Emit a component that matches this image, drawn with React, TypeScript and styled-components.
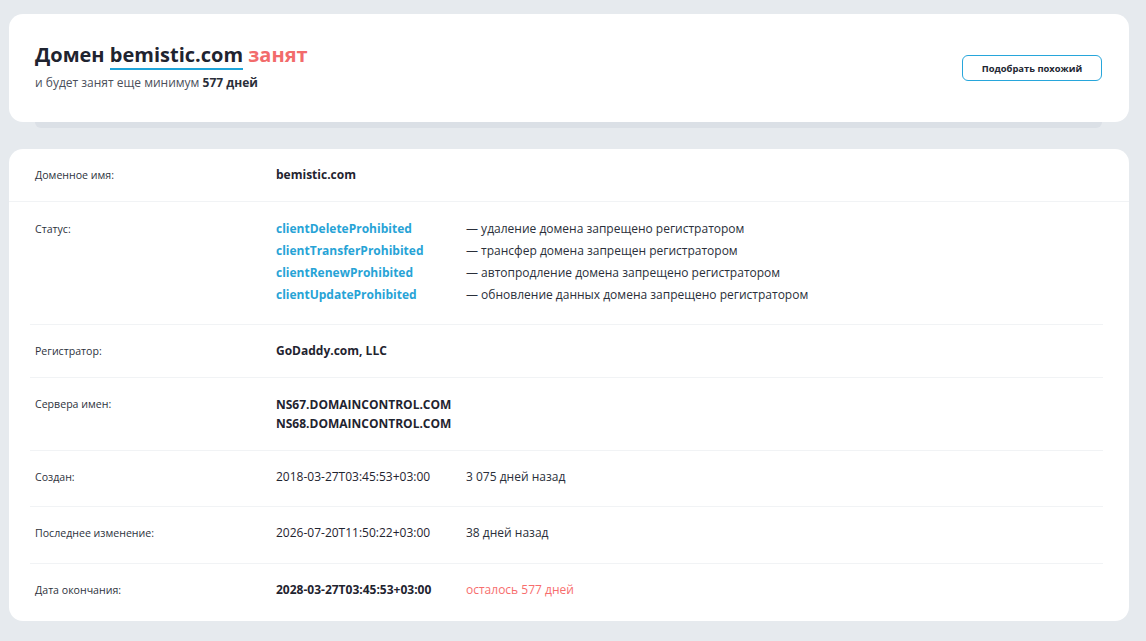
import styled, { createGlobalStyle } from 'styled-components';

const GlobalStyle = createGlobalStyle`
    html, body {
        margin: 0;
        padding: 0;
        background: #e6eaee;
        font-family: "Open Sans", "Noto Sans", sans-serif;
        color: #222631;
    }
`;

interface StatusItem {
    code: string
    text: string
}

const statuses: StatusItem[] = [
    { code: 'clientDeleteProhibited', text: '— удаление домена запрещено регистратором' },
    { code: 'clientTransferProhibited', text: '— трансфер домена запрещен регистратором' },
    { code: 'clientRenewProhibited', text: '— автопродление домена запрещено регистратором' },
    { code: 'clientUpdateProhibited', text: '— обновление данных домена запрещено регистратором' },
];

export default function App(): JSX.Element {
    return (
        <Page>
            <GlobalStyle />
            <HeaderCard>
                <div>
                    <Title>
                        Домен <DomainLink>bemistic.com</DomainLink> <Busy>занят</Busy>
                    </Title>
                    <Subtitle>
                        и будет занят еще минимум <b>577 дней</b>
                    </Subtitle>
                </div>
                <OutlineButton>Подобрать похожий</OutlineButton>
            </HeaderCard>
            <StackShadow />

            <InfoCard>
                <Row $pt={15} $pb={15} $full>
                    <Label>Доменное имя:</Label>
                    <Value $bold>bemistic.com</Value>
                </Row>
                <Row>
                    <Label>Статус:</Label>
                    <StatusList>
                        {statuses.map((s) => (
                            <StatusLine key={s.code}>
                                <StatusCode>{s.code}</StatusCode>
                                <Note>{s.text}</Note>
                            </StatusLine>
                        ))}
                    </StatusList>
                </Row>
                <Row $pt={15} $pb={15}>
                    <Label>Регистратор:</Label>
                    <Value $bold>GoDaddy.com, LLC</Value>
                </Row>
                <Row $pt={17} $pb={17} $tight>
                    <Label>Сервера имен:</Label>
                    <Value $bold>
                        NS67.DOMAINCONTROL.COM
                        <br />
                        NS68.DOMAINCONTROL.COM
                    </Value>
                </Row>
                <Row $pt={15} $pb={18}>
                    <Label>Создан:</Label>
                    <Value>2018-03-27T03:45:53+03:00</Value>
                    <Note>3 075 дней назад</Note>
                </Row>
                <Row $pt={15} $pb={19}>
                    <Label>Последнее изменение:</Label>
                    <Value>2026-07-20T11:50:22+03:00</Value>
                    <Note>38 дней назад</Note>
                </Row>
                <Row $pt={15} $pb={20} $last>
                    <Label>Дата окончания:</Label>
                    <Value $bold>2028-03-27T03:45:53+03:00</Value>
                    <Note $alert>осталось 577 дней</Note>
                </Row>
            </InfoCard>
        </Page>
    );
}

const Page = styled.div`
    width: 1120px;
    padding: 14px 0 20px 9px;
`;

const HeaderCard = styled.div`
    display: flex;
    align-items: center;
    justify-content: space-between;
    height: 108px;
    box-sizing: border-box;
    padding: 0 27px 0 26px;
    background: #ffffff;
    border-radius: 14px;
`;

const Title = styled.h1`
    margin: 0 0 5px;
    font-size: 20px;
    line-height: 30px;
    font-weight: 700;
    color: #1f2430;
`;

const DomainLink = styled.span`
    color: #1f2430;
    border-bottom: 2px solid #1ea4d9;
`;

const Busy = styled.span`
    color: #f26b6b;
`;

const Subtitle = styled.p`
    margin: 0 0 6px;
    font-size: 12px;
    line-height: 16px;
    color: #4a4f5a;

    b {
        color: #2a2f3a;
        font-weight: 700;
    }
`;

const OutlineButton = styled.button`
    width: 140px;
    height: 26px;
    background: #ffffff;
    border: 1px solid #27a6db;
    border-radius: 6px;
    font-family: inherit;
    font-size: 9.4px;
    font-weight: 700;
    color: #222631;
    cursor: pointer;
`;

const StackShadow = styled.div`
    height: 6px;
    margin: 0 27px 0 26px;
    background: #dbe0e6;
    border-radius: 0 0 8px 8px;
`;

const InfoCard = styled.div`
    margin-top: 21px;
    background: #ffffff;
    border-radius: 14px;
    overflow: hidden;
`;

const Row = styled.div<{ $pt?: number; $pb?: number; $tight?: boolean; $full?: boolean; $last?: boolean }>`
    display: grid;
    grid-template-columns: 241px 190px 1fr;
    align-items: start;
    margin: ${({ $full }) => ($full ? '0' : '0 26px 0 21px')};
    padding: ${({ $pt = 16 }) => $pt}px 0 ${({ $pb = 18 }) => $pb}px
        ${({ $full }) => ($full ? '26px' : '5px')};
    line-height: ${({ $tight }) => ($tight ? '19px' : '22px')};
    border-bottom: ${({ $last }) => ($last ? 'none' : '1px solid #f1f3f5')};
`;

const Label = styled.div`
    font-size: 10.6px;
    color: #2d323c;
`;

const Value = styled.div<{ $bold?: boolean }>`
    font-size: 12px;
    font-weight: ${({ $bold }) => ($bold ? 700 : 400)};
    color: #1f2430;
    white-space: nowrap;
`;

const Note = styled.span<{ $alert?: boolean }>`
    font-size: 12px;
    color: ${({ $alert }) => ($alert ? '#f76d6d' : '#2a2f3a')};
    white-space: nowrap;
`;

const StatusList = styled.div`
    grid-column: 2 / span 2;
    display: flex;
    flex-direction: column;
`;

const StatusLine = styled.div`
    display: grid;
    grid-template-columns: 190px 1fr;
`;

const StatusCode = styled.span`
    font-size: 12px;
    font-weight: 700;
    color: #27a3d6;
`;
